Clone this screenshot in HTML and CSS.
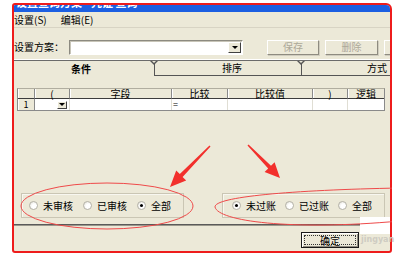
FILE: index.html
```html
<!DOCTYPE html>
<html>
<head>
<meta charset="utf-8">
<link rel="stylesheet" href="styles.css">
</head>
<body>
<div class="frame">
  <div class="titlebar"><span class="title">设置查询方案 - 凭证 查询</span></div>
  <div class="menubar">
    <span class="menu">设置(<u>S</u>)</span>
    <span class="menu">编辑(<u>E</u>)</span>
  </div>
  <div class="toolbar">
    <span class="label">设置方案：</span>
    <div class="combo"><div class="combo-btn"><span class="tri"></span></div></div>
    <div class="btn first">保存</div>
    <div class="btn">删除</div>
    <div class="btn cut"></div>
  </div>
  <div class="tabs">
    <div class="tab active">条件</div>
    <div class="tab second">排序</div>
    <div class="tab third">方式</div>
  </div>
  <div class="panel">
    <div class="grid">
      <div class="hc"></div>
      <div class="hc">(</div>
      <div class="hc">字段</div>
      <div class="hc">比较</div>
      <div class="hc">比较值</div>
      <div class="hc">)</div>
      <div class="hc last">逻辑</div>
      <div class="rh">1</div>
      <div class="dc drop"><div class="dd-btn"><span class="tri"></span></div></div>
      <div class="dc"></div>
      <div class="dc left">=</div>
      <div class="dc"></div>
      <div class="dc"></div>
      <div class="dc last"></div>
    </div>
    <div class="groups">
      <div class="group">
        <label class="radio"><span class="dot"></span>未审核</label>
        <label class="radio"><span class="dot"></span>已审核</label>
        <label class="radio"><span class="dot on"></span>全部</label>
      </div>
      <div class="group right">
        <label class="radio"><span class="dot on"></span>未过账</label>
        <label class="radio"><span class="dot"></span>已过账</label>
        <label class="radio"><span class="dot"></span>全部</label>
      </div>
    </div>
  </div>
  <div class="sep"></div>
  <div class="footer">
    <div class="okbtn"><span class="focus">确定</span></div>
  </div>
</div>
<div class="mask"></div>
<div class="watermark">jingyan</div>
<svg class="annot" width="401" height="257" viewBox="0 0 401 257">
  <defs>
    <clipPath id="fr"><rect x="12" y="3" width="380" height="250"/></clipPath>
  </defs>
  <ellipse cx="107" cy="206" rx="86" ry="23" fill="none" stroke="#ef4a4a" stroke-width="1"/>
  <path clip-path="url(#fr)" d="M215 207 C 214 197, 290 190, 400 188 M215 207 C 218 221, 290 231, 400 221" fill="none" stroke="#ef4a4a" stroke-width="1"/>
  <polygon points="210.5,146.5 182.6,176.9 186.2,180.4 170,187 176.2,170.6 179.8,174.1 209.5,145.5" fill="#f2302c"/>
  <polygon points="247.5,145.5 268.2,168.6 264.6,172.1 280,178 274.6,162.3 271,165.8 248.5,144.5" fill="#f2302c"/>
</svg>
</body>
</html>
```
FILE: styles.css
```css
html, body {
  margin: 0;
  padding: 0;
}
body {
  width: 401px;
  height: 257px;
  overflow: hidden;
  position: relative;
  background: #fff;
  font-family: "Noto Sans CJK SC", "Noto Sans", sans-serif;
  font-size: 10px;
  color: #000;
}
.frame {
  margin: 3px 0 0 12px;
  width: 376px;
  height: 246px;
  border: 2px solid #ee1c1c;
  border-radius: 3px 6px 3px 3px;
  overflow: hidden;
  background: #ece9d8;
  display: flex;
  flex-direction: column;
}
.titlebar {
  height: 7px;
  flex: none;
  background: #1c5fe2;
  overflow: hidden;
  color: #fff;
  padding-left: 2px;
}
.title {
  display: block;
  font-size: 11px;
  line-height: 11px;
  margin-top: -8px;
  font-weight: bold;
}
.menubar {
  height: 15px;
  flex: none;
  display: flex;
  align-items: center;
  gap: 14px;
  border-bottom: 1px solid #d8d4c4;
  line-height: 12px;
}
.menu u {
  text-decoration: none;
}
.toolbar {
  flex: none;
  height: 14px;
  padding: 12px 0 5px;
  border-bottom: 1px solid #fff;
  display: flex;
  align-items: center;
}
.label {
  width: 55px;
  flex: none;
  line-height: 14px;
}
.combo {
  width: 174px;
  height: 15px;
  box-sizing: border-box;
  flex: none;
  background: #fff;
  border: 1px solid;
  border-color: #8c8a80 #fff #fff #8c8a80;
  box-shadow: inset 1px 1px 0 #c8c5b8;
  display: flex;
  justify-content: flex-end;
  padding: 1px;
}
.combo-btn {
  width: 13px;
  height: 11px;
  box-sizing: border-box;
  background: #ece9d8;
  border: 1px solid;
  border-color: #fff #404040 #404040 #fff;
  display: flex;
  align-items: center;
  justify-content: center;
}
.tri {
  width: 0;
  height: 0;
  border-left: 3px solid transparent;
  border-right: 3px solid transparent;
  border-top: 3px solid #000;
}
.btn {
  flex: none;
  width: 53px;
  height: 15px;
  box-sizing: border-box;
  margin-left: 6px;
  border: 1px solid;
  border-color: #fff #8e8b80 #8e8b80 #fff;
  box-shadow: 1px 1px 0 #d0cdbf;
  color: #aca899;
  display: flex;
  align-items: center;
  justify-content: center;
  line-height: 12px;
}
.btn.first {
  margin-left: 24px;
  width: 52px;
}
.btn.cut {
  width: 30px;
}
.tabs {
  flex: none;
  height: 16px;
  box-sizing: border-box;
  border-top: 1px solid #6b6b6b;
  display: flex;
}
.tab {
  display: flex;
  align-items: center;
  justify-content: center;
  line-height: 12px;
  box-sizing: border-box;
  position: relative;
}
.tab.active {
  width: 140px;
  font-weight: bold;
  padding-right: 6px;
}
.tab.second {
  width: 147px;
  border-left: 1px solid #555;
  border-bottom: 1px solid #555;
  padding-left: 8px;
}
.tab.third {
  flex: 1;
  justify-content: flex-end;
  padding-right: 3px;
  border-left: 1px solid #555;
  border-bottom: 1px solid #555;
}
.tab.second::before,
.tab.third::before {
  content: "";
  position: absolute;
  left: -5px;
  top: 0;
  border-left: 4px solid transparent;
  border-right: 4px solid transparent;
  border-top: 4px solid #555;
}
.tab.second::after,
.tab.third::after {
  content: "";
  position: absolute;
  left: -3px;
  top: 0;
  border-left: 2px solid transparent;
  border-right: 2px solid transparent;
  border-top: 2px solid #ece9d8;
}
.panel {
  flex: 1;
  padding: 12px 0 6px 3px;
  display: flex;
  flex-direction: column;
}
.grid {
  width: 368px;
  box-sizing: border-box;
  border: 1px solid #8a8a8a;
  border-top-color: #b0ad9f;
  display: grid;
  grid-template-columns: 17px 35px 102px 56px 85px 35px 36px;
  grid-template-rows: 10px 11px;
  background: #fff;
}
.hc {
  background: #ece9d8;
  border-right: 1px solid #8a8a8a;
  border-bottom: 1px solid #3c3c3c;
  box-shadow: inset 1px 0 0 #fff;
  text-align: center;
  line-height: 9px;
  font-size: 10px;
  overflow: visible;
  white-space: nowrap;
}
.hc.last,
.dc.last {
  border-right: none;
}
.rh {
  background: #ece9d8;
  border-right: 1px solid #8a8a8a;
  box-shadow: inset 1px 0 0 #fff;
  text-align: center;
  line-height: 11px;
  font-size: 9px;
}
.dc {
  border-right: 1px solid #e0ded4;
  line-height: 11px;
  font-size: 9px;
}
.dc.left {
  padding-left: 1px;
}
.dc.drop {
  display: flex;
  justify-content: flex-end;
  align-items: center;
  padding-right: 2px;
}
.dd-btn {
  width: 10px;
  height: 8px;
  box-sizing: border-box;
  background: #ece9d8;
  border: 1px solid;
  border-color: #fff #404040 #404040 #fff;
  display: flex;
  align-items: center;
  justify-content: center;
}
.groups {
  margin-top: auto;
  margin-left: 4px;
  display: flex;
  gap: 38px;
}
.group {
  width: 163px;
  height: 25px;
  box-sizing: border-box;
  border: 1px solid #cac6b4;
  box-shadow: inset 1px 1px 0 #f8f7f0;
  display: flex;
  align-items: center;
  gap: 10px;
  padding-left: 7px;
}
.group.right {
  padding-left: 9px;
  gap: 9px;
}
.radio {
  display: flex;
  align-items: center;
  gap: 5px;
  line-height: 12px;
  white-space: nowrap;
}
.dot {
  width: 9px;
  height: 9px;
  box-sizing: border-box;
  border-radius: 50%;
  border: 1px solid #b4b2a8;
  background: radial-gradient(circle at 65% 65%, #fff 40%, #dedcd2 100%);
  display: flex;
  align-items: center;
  justify-content: center;
}
.dot.on::after {
  content: "";
  width: 3px;
  height: 3px;
  border-radius: 50%;
  background: #000;
}
.sep {
  flex: none;
  height: 2px;
  box-sizing: border-box;
  border-top: 1px solid #5a5a5a;
  border-bottom: 1px solid #9a988c;
}
.footer {
  flex: none;
  height: 25px;
  box-sizing: border-box;
  padding: 6px 0 0 287px;
}
.okbtn {
  width: 58px;
  height: 16px;
  box-sizing: border-box;
  border: 1px solid #1a1a1a;
  box-shadow: inset 1px 1px 0 #fff, inset -1px -1px 0 #8e8b80;
  padding: 2px;
  display: flex;
}
.focus {
  flex: 1;
  border: 1px dotted #333;
  display: flex;
  align-items: center;
  justify-content: center;
  line-height: 9px;
  font-size: 10px;
}
.mask {
  position: absolute;
  left: 360px;
  top: 217px;
  width: 30px;
  height: 17px;
  background: #fff;
}
.watermark {
  position: absolute;
  left: 361px;
  top: 235px;
  font-family: "DejaVu Sans", sans-serif;
  font-size: 8px;
  line-height: 9px;
  color: #cfccc2;
  font-weight: bold;
}
.annot {
  position: absolute;
  left: 0;
  top: 0;
  pointer-events: none;
}
```
